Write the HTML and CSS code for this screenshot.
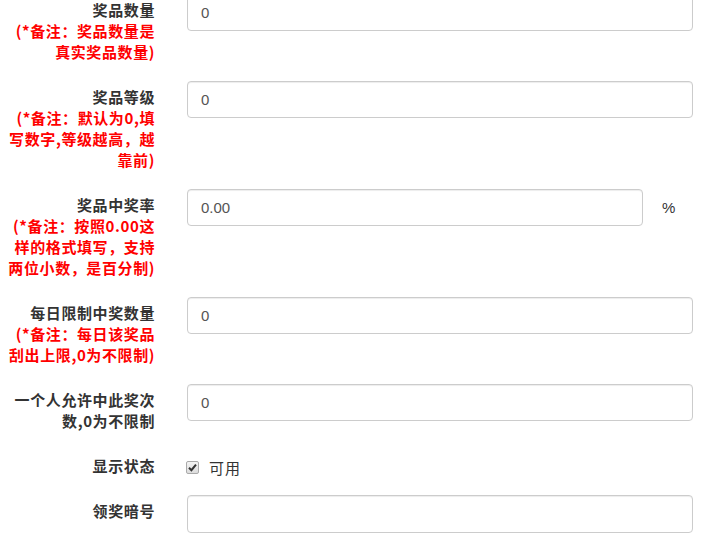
FILE: index.html
```html
<!DOCTYPE html>
<html lang="zh-CN">
<head>
<meta charset="utf-8">
<title>奖品设置</title>
<link rel="stylesheet" href="styles.css">
</head>
<body>
<form class="form">
  <div class="row">
    <div class="label">奖品数量<span class="note">(*备注：奖品数量是<br>真实奖品数量)</span></div>
    <div class="field"><div class="input">0</div></div>
  </div>
  <div class="row">
    <div class="label">奖品等级<span class="note">(*备注：默认为0,填<br>写数字,等级越高，越<br>靠前)</span></div>
    <div class="field"><div class="input">0</div></div>
  </div>
  <div class="row">
    <div class="label">奖品中奖率<span class="note">(*备注：按照0.00这<br>样的格式填写，支持<br>两位小数，是百分制)</span></div>
    <div class="field"><div class="input input-short">0.00</div><span class="unit">%</span></div>
  </div>
  <div class="row">
    <div class="label">每日限制中奖数量<span class="note">(*备注：每日该奖品<br>刮出上限,0为不限制)</span></div>
    <div class="field"><div class="input">0</div></div>
  </div>
  <div class="row">
    <div class="label">一个人允许中此奖次<br>数,0为不限制</div>
    <div class="field"><div class="input">0</div></div>
  </div>
  <div class="row row-check">
    <div class="label">显示状态</div>
    <div class="field check-field">
      <span class="checkbox"><svg width="9" height="9" viewBox="0 0 9 9"><path d="M1 4.8 L3.4 7.2 L8 1.6" fill="none" stroke="#333" stroke-width="2"/></svg></span>
      <span class="check-text">可用</span>
    </div>
  </div>
  <div class="row">
    <div class="label">领奖暗号</div>
    <div class="field"><div class="input input-tall"></div></div>
  </div>
</form>
</body>
</html>
```
FILE: styles.css
```css
html, body {
  margin: 0;
  padding: 0;
  background: #fff;
}
body {
  font-family: "Liberation Sans", Arial, "Noto Sans CJK SC", sans-serif;
  font-size: 15px;
  line-height: 21px;
  color: #333;
}
.form {
  margin-top: -6px;
  padding-left: 6px;
  padding-right: 12px;
}
.row {
  display: grid;
  grid-template-columns: 149px 506px;
  column-gap: 32px;
  margin-bottom: 19px;
  align-items: start;
}
.label {
  padding-top: 5px;
  text-align: right;
  font-weight: bold;
  color: #333;
  font-family: "Noto Sans CJK SC", sans-serif;
  letter-spacing: 0.6px;
  white-space: nowrap;
}
.note {
  display: block;
  color: #f00;
}
.field {
  display: flex;
  align-items: center;
}
.input {
  box-sizing: border-box;
  width: 100%;
  height: 37px;
  border: 1px solid #ccc;
  border-radius: 4px;
  padding: 7px 13px;
  color: #555;
  font-size: 15px;
  line-height: 21px;
  box-shadow: inset 0 1px 1px rgba(0,0,0,0.075);
}
.input-tall {
  height: 38px;
}
.input-short {
  width: 456px;
  flex: none;
}
.unit {
  margin-left: 19px;
  color: #333;
}
.row-check {
  height: 26px;
}
.check-field {
  padding-top: 7px;
}
.checkbox {
  box-sizing: border-box;
  width: 13px;
  height: 13px;
  border: 1px solid #aaa;
  border-radius: 2px;
  background: linear-gradient(#f4f4f4, #dcdcdc);
  display: inline-flex;
  align-items: center;
  justify-content: center;
  margin-left: -1px;
}
.check-text {
  margin-left: 10px;
  font-family: "Noto Sans CJK SC", sans-serif;
  letter-spacing: 1px;
}
```
